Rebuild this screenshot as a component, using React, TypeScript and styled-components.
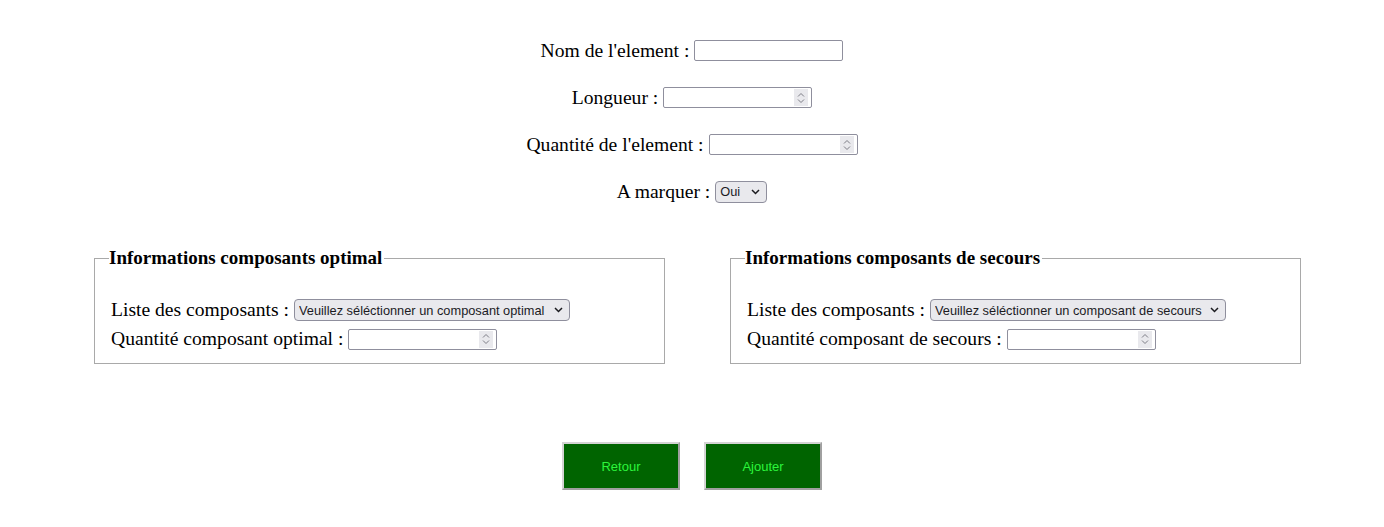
import React from "react";
import styled, { createGlobalStyle } from "styled-components";

const Global = createGlobalStyle`
  html, body { margin: 0; padding: 0; background: #ffffff; }
  body { font-family: "Liberation Serif", "Times New Roman", serif; color: #000; }
`;

const Page = styled.div`
  padding: 39px 8px 0;
`;

const TopForm = styled.div`
  display: flex;
  flex-direction: column;
  align-items: center;
  gap: 24px;
`;

const Row = styled.div`
  display: flex;
  align-items: center;
  gap: 5px;
  height: 23px;
  font-size: 19.6px;
`;

const Field = styled.span`
  box-sizing: border-box;
  display: inline-flex;
  align-items: center;
  width: 149px;
  height: 21px;
  padding: 1px 2px 1px 2px;
  border: 1px solid #8f8f9d;
  border-radius: 2px;
  background: #fff;
`;

const FieldInput = styled.input`
  flex: 1;
  min-width: 0;
  height: 100%;
  border: none;
  outline: none;
  padding: 0;
  margin: 0;
  background: transparent;
  font-family: "Liberation Sans", Arial, sans-serif;
  font-size: 13.33px;
`;

const Spinner = styled.span`
  display: inline-flex;
  flex-direction: column;
  align-items: center;
  justify-content: center;
  gap: 2px;
  width: 14px;
  height: 17px;
  margin-right: 1px;
  background: #e9e9ed;
`;

const SelectWrap = styled.span<{ $w: number }>`
  position: relative;
  display: inline-flex;
  width: ${(p) => p.$w}px;
  height: 22px;
`;

const NativeSelect = styled.select`
  box-sizing: border-box;
  appearance: none;
  -webkit-appearance: none;
  width: 100%;
  height: 100%;
  margin: 0;
  padding: 0 20px 0 4px;
  border: 1px solid #8f8f9d;
  border-radius: 4px;
  background: #e9e9ed;
  color: #1b1b1f;
  font-family: "Liberation Sans", Arial, sans-serif;
  font-size: 12.8px;
`;

const Chevron = styled.svg`
  position: absolute;
  right: 7px;
  top: 8px;
  pointer-events: none;
`;

const Panels = styled.div`
  display: flex;
  gap: 65px;
  padding-left: 86px;
  margin-top: 44px;
`;

const Panel = styled.fieldset`
  box-sizing: border-box;
  width: 571px;
  margin: 0;
  padding: 7px 15px 13px 16px;
  border: 1px solid #a9a9a9;
  font-size: 19.6px;
`;

const Legend = styled.legend`
  font-weight: bold;
  font-size: 19px;
  padding: 0 2px 0 0;
  margin-left: -2px;
`;

const PanelBody = styled.div`
  display: flex;
  flex-direction: column;
  gap: 7px;
  margin-top: 23px;
`;

const PanelRow = styled.div`
  display: flex;
  align-items: center;
  gap: 5px;
  height: 22px;
`;

const Buttons = styled.div`
  display: flex;
  justify-content: center;
  gap: 24px;
  margin-top: 78px;
`;

const ActionButton = styled.button`
  box-sizing: border-box;
  width: 118px;
  height: 48px;
  background: #006400;
  color: #2cf53c;
  border: 2px solid;
  border-color: #d4d4d4 #a0a0a0 #a0a0a0 #d4d4d4;
  font-family: "Liberation Sans", Arial, sans-serif;
  font-size: 13px;
  cursor: pointer;
`;

function SpinIcon() {
  return (
    <Spinner>
      <svg width="8" height="5" viewBox="0 0 8 5">
        <path d="M1 4.5 L4 1.5 L7 4.5" fill="none" stroke="#7d7d85" strokeWidth="1" />
      </svg>
      <svg width="8" height="5" viewBox="0 0 8 5">
        <path d="M1 0.5 L4 3.5 L7 0.5" fill="none" stroke="#7d7d85" strokeWidth="1" />
      </svg>
    </Spinner>
  );
}

function TextField() {
  return (
    <Field>
      <FieldInput type="text" />
    </Field>
  );
}

function NumberField() {
  return (
    <Field>
      <FieldInput type="text" inputMode="numeric" />
      <SpinIcon />
    </Field>
  );
}

function Select({ w, options }: { w: number; options: string[] }) {
  return (
    <SelectWrap $w={w}>
      <NativeSelect defaultValue={options[0]}>
        {options.map((o) => (
          <option key={o}>{o}</option>
        ))}
      </NativeSelect>
      <Chevron width="9" height="6" viewBox="0 0 9 6">
        <path d="M1 1 L4.5 4.5 L8 1" fill="none" stroke="#1b1b1f" strokeWidth="1.5" />
      </Chevron>
    </SelectWrap>
  );
}

export default function App() {
  return (
    <Page>
      <Global />
      <TopForm>
        <Row>
          <span>Nom de l'element :</span>
          <TextField />
        </Row>
        <Row>
          <span>Longueur :</span>
          <NumberField />
        </Row>
        <Row>
          <span>Quantité de l'element :</span>
          <NumberField />
        </Row>
        <Row>
          <span>A marquer :</span>
          <Select w={52} options={["Oui", "Non"]} />
        </Row>
      </TopForm>
      <Panels>
        <Panel>
          <Legend>Informations composants optimal</Legend>
          <PanelBody>
            <PanelRow>
              <span>Liste des composants :</span>
              <Select w={276} options={["Veuillez séléctionner un composant optimal"]} />
            </PanelRow>
            <PanelRow>
              <span>Quantité composant optimal :</span>
              <NumberField />
            </PanelRow>
          </PanelBody>
        </Panel>
        <Panel>
          <Legend>Informations composants de secours</Legend>
          <PanelBody>
            <PanelRow>
              <span>Liste des composants :</span>
              <Select w={296} options={["Veuillez séléctionner un composant de secours"]} />
            </PanelRow>
            <PanelRow>
              <span>Quantité composant de secours :</span>
              <NumberField />
            </PanelRow>
          </PanelBody>
        </Panel>
      </Panels>
      <Buttons>
        <ActionButton>Retour</ActionButton>
        <ActionButton>Ajouter</ActionButton>
      </Buttons>
    </Page>
  );
}
